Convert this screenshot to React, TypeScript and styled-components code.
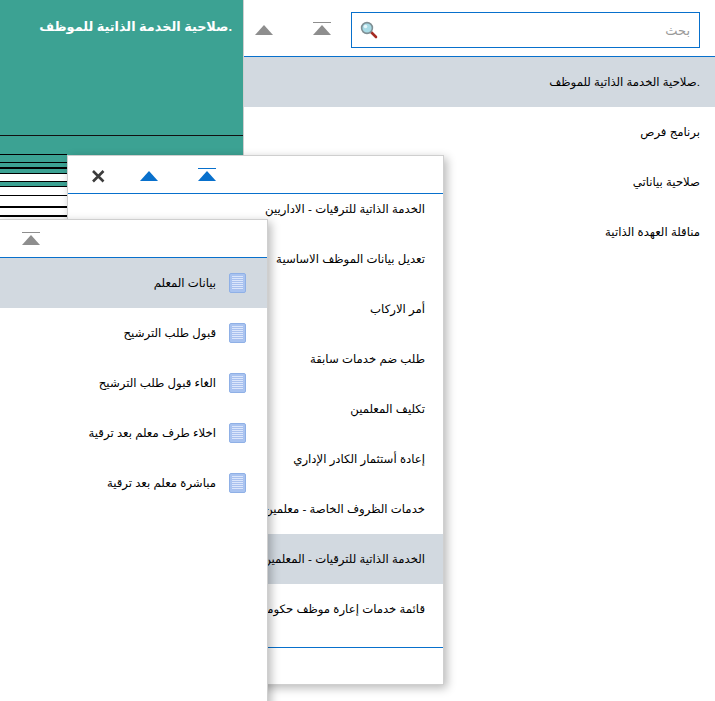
import React from "react";
import styled, { createGlobalStyle } from "styled-components";

const BLUE = "#0870cc";
const TEAL = "#3ca293";

const Global = createGlobalStyle`
  html, body { margin: 0; padding: 0; background: #fff; }
  body { width: 715px; height: 701px; overflow: hidden; font-family: Arial, "Liberation Sans", "DejaVu Sans", sans-serif; }
`;

const Page = styled.div`
  position: relative;
  display: flex;
  width: 715px;
  height: 701px;
  overflow: hidden;
  background: #fff;
`;

const TealPanel = styled.aside`
  display: flex;
  flex-direction: column;
  width: 244px;
  height: 155px;
  flex: none;
  box-sizing: border-box;
  padding-top: 17px;
  background: ${TEAL};
  border-right: 1px solid #cfcfcf;
`;

const TealTitle = styled.div`
  direction: rtl;
  padding-right: 11px;
  color: #fff;
  font-size: 12.8px;
  font-weight: 700;
  line-height: 20px;
`;

const TealDivider = styled.div`
  height: 1px;
  margin-top: auto;
  margin-bottom: 19px;
  background: #111;
`;

const Stripes = styled.div`
  position: absolute;
  left: 0;
  top: 154px;
  width: 67px;
  height: 65px;
  background: linear-gradient(${TEAL} 0 19px, #fff 19px 27px, ${TEAL} 27px 32px, #fff 32px);
`;

const Stripe = styled.div<{ $y: number; $h: number }>`
  position: absolute;
  left: 0;
  right: 0;
  top: ${(p) => p.$y}px;
  height: ${(p) => p.$h}px;
  background: #000;
`;

const MainPane = styled.main`
  flex: 1;
  min-width: 0;
  display: flex;
  flex-direction: column;
`;

const Toolbar = styled.div`
  display: flex;
  align-items: center;
  height: 57px;
  flex: none;
  box-sizing: border-box;
  border-bottom: 1px solid ${BLUE};
`;

const IconGroup = styled.div`
  display: flex;
  gap: 40px;
  padding-left: 11px;
`;

const SearchBox = styled.div`
  display: flex;
  align-items: center;
  justify-content: space-between;
  width: 349px;
  height: 36px;
  margin: 4px 0 0 20px;
  box-sizing: border-box;
  padding: 0 9px 0 8px;
  border: 1px solid ${BLUE};
`;

const Placeholder = styled.span`
  direction: rtl;
  font-size: 13px;
  color: #999;
`;

const Row = styled.div<{ $active?: boolean }>`
  display: flex;
  align-items: center;
  height: 50px;
  flex: none;
  direction: rtl;
  white-space: nowrap;
  overflow: hidden;
  font-size: 11.7px;
  color: #000;
  background: ${(p) => (p.$active ? "#d2d9e0" : "transparent")};
`;

const MainRow = styled(Row)`
  padding-right: 15px;
`;

const Flyout = styled.div`
  position: absolute;
  background: #fff;
  box-sizing: border-box;
  box-shadow: 3px 3px 9px rgba(0, 0, 0, 0.28);
  border: 1px solid #cfcfcf;
  display: flex;
  flex-direction: column;
`;

const MiddleFlyout = styled(Flyout)`
  left: 67px;
  top: 155px;
  width: 377px;
  height: 530px;
`;

const RightFlyout = styled(Flyout)`
  left: -1px;
  top: 219px;
  width: 269px;
  height: 490px;
`;

const FlyoutHeader = styled.div`
  display: flex;
  align-items: center;
  height: 38px;
  flex: none;
  box-sizing: border-box;
  padding-bottom: 1px;
  border-bottom: 1px solid ${BLUE};
`;

const MiddleIcons = styled.div`
  display: flex;
  align-items: center;
  padding-left: 23px;
`;

const CloseSlot = styled.div`
  margin: 4px 35px 0 0;
`;

const MoveIcons = styled.div`
  display: flex;
  gap: 40px;
`;

const LeftHeaderIcons = styled.div`
  padding-left: 22px;
`;

const Scroller = styled.div`
  height: 453px;
  flex: none;
  overflow: hidden;
  border-bottom: 1px solid ${BLUE};
`;

const ScrollInner = styled.div`
  margin-top: -10px;
`;

const MiddleRow = styled(Row)`
  padding-right: 18px;
`;

const IconRow = styled(Row)`
  gap: 13px;
  padding-right: 21px;
`;

const Tri = ({ color = "#8e8e8e", bar = false }: { color?: string; bar?: boolean }) => (
  <svg width="18" height="14" viewBox="0 0 18 14" style={{ display: "block" }}>
    {bar && <rect x="0" y="1" width="18" height="1" fill={color} />}
    <path d="M9 4 L18 14 L0 14 Z" fill={color} />
  </svg>
);

const Close = () => (
  <svg width="14" height="14" viewBox="0 0 14 14" style={{ display: "block" }}>
    <path d="M2 2 L12.5 12.5 M12.5 2 L2 12.5" stroke="#3c3c3c" strokeWidth="2.6" />
  </svg>
);

const Magnifier = () => (
  <svg width="18" height="18" viewBox="0 0 18 18" style={{ display: "block" }}>
    <path d="M10.5 10.5 L16 16" stroke="#a52a22" strokeWidth="2.6" strokeLinecap="round" />
    <circle cx="7" cy="7" r="5.4" fill="#a8dbe6" stroke="#7f8f94" strokeWidth="1.6" />
    <circle cx="5.5" cy="5.5" r="1.8" fill="#e4f6fa" />
  </svg>
);

const DocIcon = () => (
  <svg width="17" height="20" viewBox="0 0 17 20" style={{ display: "block", flex: "none" }}>
    <rect x="0.5" y="0.5" width="16" height="19" rx="1.5" fill="#a9c3f0" stroke="#8fb0e6" />
    <rect x="3" y="3" width="11" height="14" fill="#dbe6fb" />
    {[4, 6, 8, 10, 12, 14, 16].map((y) => (
      <rect key={y} x="3" y={y} width="11" height="1" fill="#a8c0ee" />
    ))}
  </svg>
);

const mainItems = [".صلاحية الخدمة الذاتية للموظف", "برنامج فرص", "صلاحية بياناتي", "مناقلة العهدة الذاتية"];
const middleItems = [
  "الخدمة الذاتية للترقيات - الاداريين",
  "تعديل بيانات الموظف الاساسية",
  "أمر الاركاب",
  "طلب ضم خدمات سابقة",
  "تكليف المعلمين",
  "إعادة أستثمار الكادر الإداري",
  "خدمات الظروف الخاصة - معلمين",
  "الخدمة الذاتية للترقيات - المعلمين",
  "قائمة خدمات إعارة موظف حكومي",
];
const leftItems = ["بيانات المعلم", "قبول طلب الترشيح", "الغاء قبول طلب الترشيح", "اخلاء طرف معلم بعد ترقية", "مباشرة معلم بعد ترقية"];
const stripes: [number, number][] = [[0, 1], [8, 1], [13, 2], [19, 1], [27, 1], [32, 1], [41, 1], [52, 2], [61, 2]];

export default function App() {
  return (
    <Page>
      <Global />
      <TealPanel>
        <TealTitle>.صلاحية الخدمة الذاتية للموظف</TealTitle>
        <TealDivider />
      </TealPanel>
      <MainPane>
        <Toolbar>
          <IconGroup>
            <Tri />
            <Tri bar />
          </IconGroup>
          <SearchBox>
            <Magnifier />
            <Placeholder>بحث</Placeholder>
          </SearchBox>
        </Toolbar>
        {mainItems.map((t, i) => (
          <MainRow key={t} $active={i === 0}>{t}</MainRow>
        ))}
      </MainPane>
      <Stripes>
        {stripes.map(([y, h]) => (
          <Stripe key={y} $y={y} $h={h} />
        ))}
      </Stripes>
      <MiddleFlyout>
        <FlyoutHeader>
          <MiddleIcons>
            <CloseSlot>
              <Close />
            </CloseSlot>
            <MoveIcons>
              <Tri color={BLUE} />
              <Tri color={BLUE} bar />
            </MoveIcons>
          </MiddleIcons>
        </FlyoutHeader>
        <Scroller>
          <ScrollInner>
            {middleItems.map((t, i) => (
              <MiddleRow key={t} $active={i === 7}>{t}</MiddleRow>
            ))}
          </ScrollInner>
        </Scroller>
      </MiddleFlyout>
      <RightFlyout>
        <FlyoutHeader>
          <LeftHeaderIcons>
            <Tri bar />
          </LeftHeaderIcons>
        </FlyoutHeader>
        {leftItems.map((t, i) => (
          <IconRow key={t} $active={i === 0}>
            <DocIcon />
            <span>{t}</span>
          </IconRow>
        ))}
      </RightFlyout>
    </Page>
  );
}
